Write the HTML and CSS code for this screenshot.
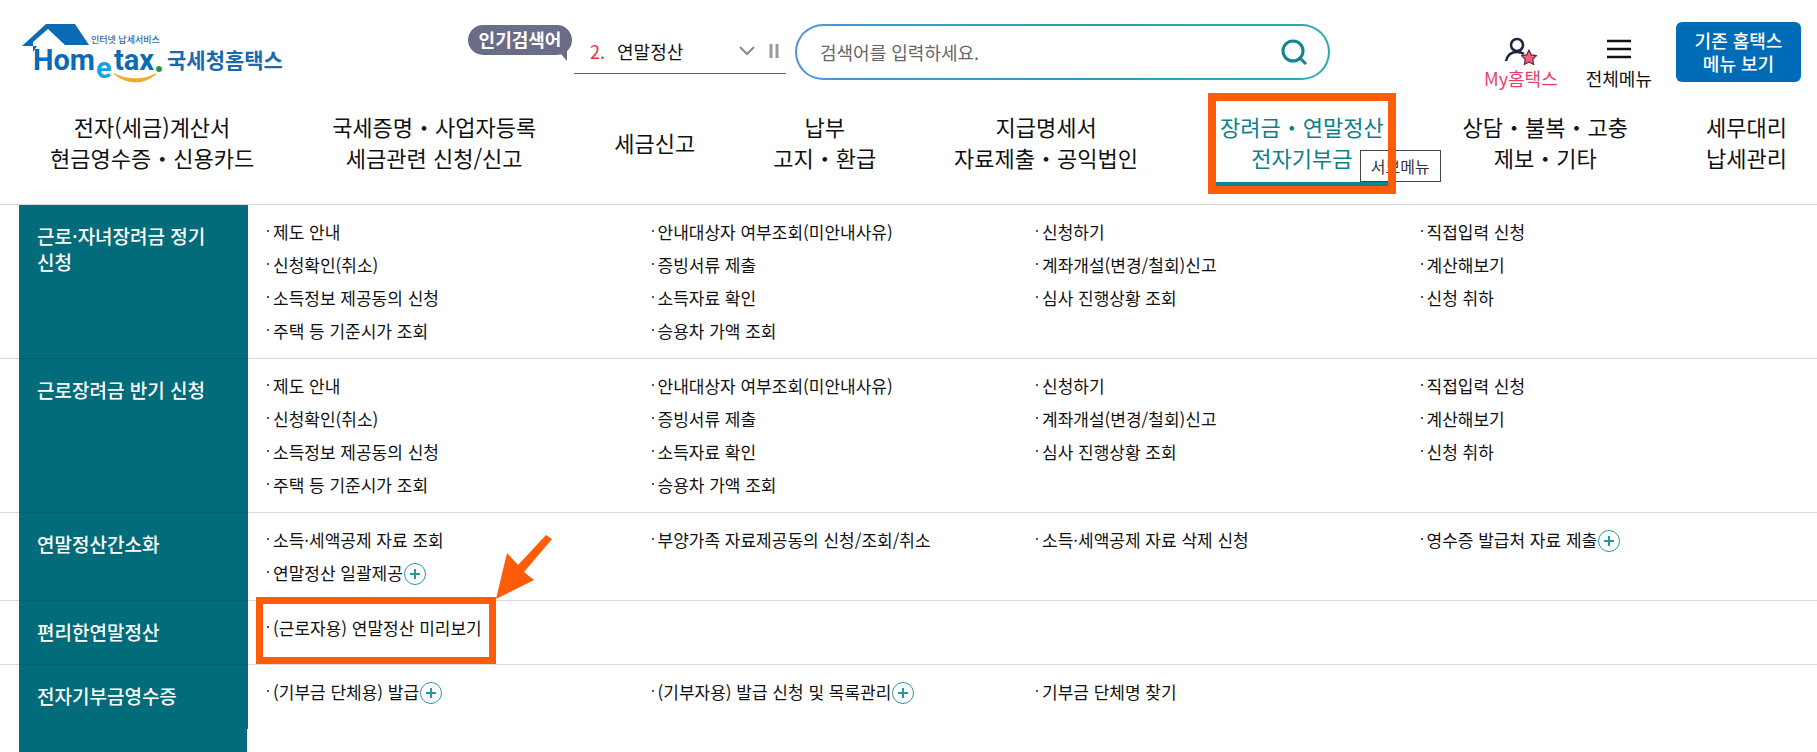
FILE: index.html
```
<!DOCTYPE html>
<html lang="ko">
<head>
  <meta charset="UTF-8">
  <meta name="viewport" content="width=device-width, initial-scale=1.0">
  <title>국세청 홈택스</title>
  <link rel="stylesheet" href="styles.css">
</head>
<body>

  <header class="header">
    <a href="#" class="logo" aria-label="Hometax 국세청홈택스">
      <svg width="262" height="64" viewBox="22 22 262 64">
        <path d="M22 46 L46 24 H75 L89 45 H65 L48 29 L33 42 V52 L37 46 Z" fill="#0b6ab5"/>
        <text x="91" y="43" class="logo-small">인터넷 납세서비스</text>
        <text x="33" y="70" class="logo-en">Hom</text>
        <text x="96" y="78" class="logo-e">e</text>
        <text x="114" y="70" class="logo-en">tax</text>
        <circle cx="159" cy="69" r="3" fill="#1f9b45"/>
        <path d="M114 74 Q136 90 156 74 Q136 84 114 74 Z" fill="#f5a733" stroke="#f5a733"/>
        <text x="167" y="68" class="logo-ko">국세청홈택스</text>
      </svg>
    </a>

    <div class="search-area">
      <strong class="badge">인기검색어</strong>
      <div class="ticker">
        <span class="rank">2.</span>
        <a href="#">연말정산</a>
        <button type="button" class="icon-btn more" aria-label="펼치기">
          <svg width="16" height="10" viewBox="0 0 16 10"><path d="M1 1 L8 8 L15 1" fill="none" stroke="#888" stroke-width="2"/></svg>
        </button>
        <button type="button" class="icon-btn" aria-label="정지">
          <svg width="10" height="14" viewBox="0 0 10 14"><path d="M2 0 V14 M8 0 V14" stroke="#999" stroke-width="3"/></svg>
        </button>
      </div>
      <form class="search">
        <input type="text" id="keyword" aria-label="검색어" placeholder="검색어를 입력하세요.">
        <button type="submit" class="icon-btn" aria-label="검색">
          <svg width="26" height="26" viewBox="0 0 26 26"><circle cx="12" cy="12" r="10" fill="none" stroke="#12868f" stroke-width="3"/><path d="M18 18 L25 25" stroke="#12868f" stroke-width="3"/></svg>
        </button>
      </form>
    </div>

    <div class="util">
      <a href="#" class="util-link my">
        <svg width="34" height="29" viewBox="0 0 34 29">
          <circle cx="13" cy="8" r="6" fill="none" stroke="#1b2340" stroke-width="2.5"/>
          <path d="M2 24 Q4 15 13 15 Q17 15 20 17" fill="none" stroke="#1b2340" stroke-width="2.5"/>
          <path d="M25 13 L27.3 18 L32.5 18.6 L28.7 22.3 L29.7 27.5 L25 25 L20.3 27.5 L21.3 22.3 L17.5 18.6 L22.7 18 Z" fill="#fb5b7c" stroke="#5a3540" stroke-width="1.3" stroke-linejoin="round"/>
        </svg>
        My홈택스
      </a>
      <a href="#" class="util-link">
        <svg width="26" height="29" viewBox="0 0 26 29"><path d="M1 4 H25 M1 12 H25 M1 20 H25" stroke="#111" stroke-width="2.5"/></svg>
        전체메뉴
      </a>
      <button type="button" class="old-btn">기존 홈택스<br>메뉴 보기</button>
    </div>
  </header>

  <nav class="gnb">
    <a href="#">전자(세금)계산서<br>현금영수증・신용카드</a>
    <a href="#">국세증명・사업자등록<br>세금관련 신청/신고</a>
    <a href="#">세금신고</a>
    <a href="#">납부<br>고지・환급</a>
    <a href="#">지급명세서<br>자료제출・공익법인</a>
    <a href="#" class="active">장려금・연말정산<br>전자기부금<span class="tooltip">서브메뉴</span><span class="mark"></span></a>
    <a href="#">상담・불복・고충<br>제보・기타</a>
    <a href="#">세무대리<br>납세관리</a>
  </nav>

  <main class="menu">
    <section class="row">
      <h2>근로·자녀장려금 정기 신청</h2>
      <div class="cols">
        <ul>
          <li><a href="#">제도 안내</a></li>
          <li><a href="#">신청확인(취소)</a></li>
          <li><a href="#">소득정보 제공동의 신청</a></li>
          <li><a href="#">주택 등 기준시가 조회</a></li>
        </ul>
        <ul>
          <li><a href="#">안내대상자 여부조회(미안내사유)</a></li>
          <li><a href="#">증빙서류 제출</a></li>
          <li><a href="#">소득자료 확인</a></li>
          <li><a href="#">승용차 가액 조회</a></li>
        </ul>
        <ul>
          <li><a href="#">신청하기</a></li>
          <li><a href="#">계좌개설(변경/철회)신고</a></li>
          <li><a href="#">심사 진행상황 조회</a></li>
        </ul>
        <ul>
          <li><a href="#">직접입력 신청</a></li>
          <li><a href="#">계산해보기</a></li>
          <li><a href="#">신청 취하</a></li>
        </ul>
      </div>
    </section>

    <section class="row">
      <h2>근로장려금 반기 신청</h2>
      <div class="cols">
        <ul>
          <li><a href="#">제도 안내</a></li>
          <li><a href="#">신청확인(취소)</a></li>
          <li><a href="#">소득정보 제공동의 신청</a></li>
          <li><a href="#">주택 등 기준시가 조회</a></li>
        </ul>
        <ul>
          <li><a href="#">안내대상자 여부조회(미안내사유)</a></li>
          <li><a href="#">증빙서류 제출</a></li>
          <li><a href="#">소득자료 확인</a></li>
          <li><a href="#">승용차 가액 조회</a></li>
        </ul>
        <ul>
          <li><a href="#">신청하기</a></li>
          <li><a href="#">계좌개설(변경/철회)신고</a></li>
          <li><a href="#">심사 진행상황 조회</a></li>
        </ul>
        <ul>
          <li><a href="#">직접입력 신청</a></li>
          <li><a href="#">계산해보기</a></li>
          <li><a href="#">신청 취하</a></li>
        </ul>
      </div>
    </section>

    <section class="row">
      <h2>연말정산간소화</h2>
      <div class="cols">
        <ul>
          <li><a href="#">소득·세액공제 자료 조회</a></li>
          <li><a href="#">연말정산 일괄제공</a><button type="button" class="plus" aria-label="더보기"></button></li>
        </ul>
        <ul>
          <li><a href="#">부양가족 자료제공동의 신청/조회/취소</a></li>
        </ul>
        <ul>
          <li><a href="#">소득·세액공제 자료 삭제 신청</a></li>
        </ul>
        <ul>
          <li><a href="#">영수증 발급처 자료 제출</a><button type="button" class="plus" aria-label="더보기"></button></li>
        </ul>
      </div>
    </section>

    <section class="row">
      <h2>편리한연말정산</h2>
      <div class="cols">
        <ul>
          <li class="marked">
            <a href="#">(근로자용) 연말정산 미리보기</a>
            <span class="mark"></span>
            <svg class="arrow" width="58" height="64" viewBox="0 0 58 64"><path d="M0 64 L11 18 L22 30 L50 0 L56 4 L28 37 L38 45 Z" fill="#ff5c0a"/></svg>
          </li>
        </ul>
      </div>
    </section>

    <section class="row">
      <h2>전자기부금영수증</h2>
      <div class="cols">
        <ul>
          <li><a href="#">(기부금 단체용) 발급</a><button type="button" class="plus" aria-label="더보기"></button></li>
        </ul>
        <ul>
          <li><a href="#">(기부자용) 발급 신청 및 목록관리</a><button type="button" class="plus" aria-label="더보기"></button></li>
        </ul>
        <ul>
          <li><a href="#">기부금 단체명 찾기</a></li>
        </ul>
      </div>
    </section>
    <div class="side-end"></div>
  </main>

</body>
</html>
```
FILE: styles.css
```
* {
  box-sizing: border-box;
}

body {
  font-family: "Noto Sans CJK KR", "Noto Sans", sans-serif;
  background: #fff;
  color: #111;
  margin: 0;
  min-height: 100vh;
  display: flex;
  flex-direction: column;
  word-break: keep-all;
}

a {
  color: inherit;
  text-decoration: none;
}

button {
  font-family: inherit;
  cursor: pointer;
}

svg {
  display: block;
}

/* header */
.header {
  display: flex;
  align-items: flex-start;
  height: 101px;
  padding: 22px 16px 0 22px;
}

.logo-en,
.logo-e {
  font-family: Roboto, "Liberation Sans", sans-serif;
  font-weight: bold;
  font-size: 29px;
  fill: #0b6ab5;
}

.logo-e {
  fill: #16a3e0;
}

.logo-small {
  font-size: 9px;
  font-weight: 500;
  fill: #2a6ba8;
}

.logo-ko {
  font-size: 21px;
  font-weight: bold;
  fill: #1c68ae;
}

.search-area {
  display: flex;
  align-items: flex-start;
  flex: 0 1 862px;
  margin-left: 184px;
}

.badge {
  position: relative;
  margin-top: 3px;
  width: 104px;
  height: 30px;
  line-height: 28px;
  border-radius: 15px;
  background: #6b6d88;
  color: #fff;
  font-size: 18px;
  text-align: center;
}

.badge::after {
  content: "";
  position: absolute;
  right: 5px;
  bottom: -6px;
  border-top: 14px solid #6b6d88;
  border-left: 12px solid transparent;
}

.ticker {
  display: flex;
  align-items: center;
  width: 212px;
  height: 52px;
  margin-left: 2px;
  padding: 6px 7px 0 16px;
  border-bottom: 1px solid #1b7f8c;
  font-size: 18px;
}

.rank {
  color: #e8343f;
  margin-right: 12px;
}

.icon-btn {
  border: 0;
  padding: 0;
  background: none;
}

.more {
  margin: 0 14px 0 auto;
}

.search {
  display: flex;
  align-items: center;
  flex: 1;
  height: 56px;
  margin: 2px 0 0 9px;
  padding: 0 21px 0 23px;
  border: 2px solid transparent;
  border-radius: 28px;
  background: linear-gradient(#fff, #fff) padding-box, linear-gradient(90deg, #4d94e0, #2aa0b2 55%, #2aabb5) border-box;
}

.search input {
  flex: 1;
  min-width: 0;
  border: 0;
  padding: 0;
  outline: none;
  background: none;
  font-family: inherit;
  font-size: 18px;
}

.search input::placeholder {
  color: #666;
}

.util {
  display: flex;
  align-items: flex-start;
  margin-left: auto;
}

.util-link {
  display: flex;
  flex-direction: column;
  align-items: center;
  margin-right: 28px;
  padding-top: 15px;
  font-size: 18px;
  line-height: 24px;
}

.util-link + .util-link {
  margin-right: 24px;
}

.my {
  color: #e8406a;
}

.old-btn {
  width: 125px;
  height: 60px;
  border: 0;
  border-radius: 6px;
  background: #006cb7;
  color: #fff;
  font-size: 18px;
  font-weight: 500;
  line-height: 23px;
}

/* main navigation */
.gnb {
  display: flex;
  justify-content: space-between;
  padding: 0 30px 18px 50px;
  border-bottom: 1px solid #d5d8d8;
}

.gnb > a {
  position: relative;
  display: grid;
  align-content: center;
  padding: 10px 0 9px;
  border-bottom: 4px solid transparent;
  font-size: 22px;
  line-height: 31px;
  text-align: center;
  white-space: nowrap;
}

.gnb > a.active {
  display: block;
  margin-right: -3px;
  padding: 10px 4px 9px;
  color: #0e7f89;
  border-color: #0b8494;
}

.tooltip {
  position: absolute;
  right: -53px;
  bottom: 0;
  padding: 0 10px;
  border: 1px solid #444;
  background: #fff;
  color: #333;
  font-size: 16px;
  line-height: 30px;
}

/* orange highlight box */
.mark {
  position: absolute;
  border: 7px solid #ff5c0a;
  pointer-events: none;
}

.gnb .mark {
  top: -8px;
  right: -8px;
  bottom: -12px;
  left: -8px;
  border-width: 8px;
}

/* sub menu */
.menu {
  display: flex;
  flex-direction: column;
  flex: 1;
  --side: #036c7a;
}

.row {
  display: flex;
  min-height: 64px;
  border-bottom: 1px solid #d5d8d8;
}

.row:nth-of-type(5) {
  border-bottom: 0;
}

.row h2 {
  flex: 0 0 229px;
  margin: 0 0 -1px 19px;
  padding: 18px 18px 0;
  border-bottom: 1px solid #045f6c;
  background: var(--side);
  color: #fff;
  font-size: 19px;
  font-weight: 500;
  line-height: 26px;
}

.row:nth-of-type(5) h2 {
  margin-bottom: 0;
  border-bottom: 0;
}

.cols {
  flex: 1;
  display: grid;
  grid-template-columns: repeat(4, 1fr);
  padding: 10px 12px 11px 19px;
}

.cols ul {
  margin: 0;
  padding: 0;
  list-style: none;
}

.cols li {
  position: relative;
  display: flex;
  align-items: center;
  padding-left: 6px;
  height: 33px;
  font-size: 17px;
  white-space: nowrap;
}

.cols li::before {
  content: "";
  position: absolute;
  left: 0;
  top: 15px;
  width: 2px;
  height: 2px;
  background: #555;
}

.plus {
  width: 22px;
  height: 22px;
  margin: 2px 0 0 1px;
  padding: 0;
  border: 1px solid #2f979e;
  border-radius: 50%;
  background:
    linear-gradient(#2b959c, #2b959c) center / 10px 2px no-repeat,
    linear-gradient(#2b959c, #2b959c) center / 2px 10px no-repeat;
}

.marked .mark {
  left: -11px;
  top: -14px;
  width: 240px;
  height: 67px;
}

.arrow {
  position: absolute;
  left: 229px;
  top: -76px;
}

.side-end {
  flex: 1;
  width: 228px;
  margin-left: 19px;
  background: var(--side);
}
```
